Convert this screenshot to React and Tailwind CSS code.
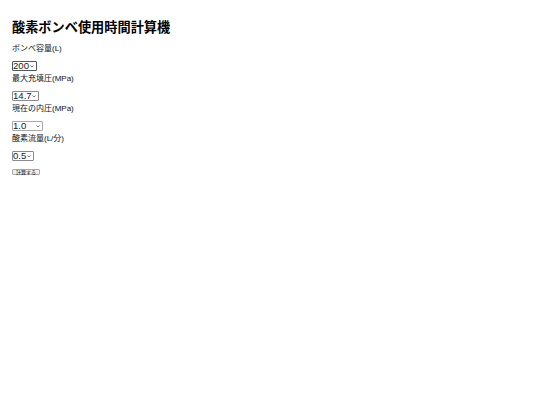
import { useState } from "react";

const fontCls = "font-['Liberation_Sans','Noto_Sans_CJK_JP',sans-serif]";

function Chevron() {
  return (
    <svg
      className="pointer-events-none absolute right-[3px] top-[4px] h-[2.5px] w-[4px]"
      viewBox="0 0 8 5"
      fill="none"
      stroke="#444"
      strokeWidth="1.4"
    >
      <path d="M1 1l3 3 3-3" />
    </svg>
  );
}

function Field({ label, value, options, onChange, width, border }) {
  return (
    <div className="flex flex-col items-start">
      <label className="block text-[8px] leading-[10px] text-[#111] mb-[7px]">{label}</label>
      <div className="relative mb-[3px] h-[10px]">
        <select
          value={value}
          onChange={(e) => onChange(e.target.value)}
          className={`block appearance-none bg-white h-[10px] text-[9.6px] leading-[8px] pl-0 pr-0 py-0 text-[#1a1a1a] rounded-[1px] border outline-none ${fontCls} ${width} ${border}`}
        >
          {options.map((o) => (
            <option key={o} value={o}>
              {o}
            </option>
          ))}
        </select>
        <Chevron />
      </div>
    </div>
  );
}

export default function App() {
  const [capacity, setCapacity] = useState("200");
  const [maxPressure, setMaxPressure] = useState("14.7");
  const [pressure, setPressure] = useState("1.0");
  const [flow, setFlow] = useState("0.5");

  const handleCalc = () => {
    // 使用可能時間(分) = 容量 × 内圧 / 最大充填圧 / 流量
    const minutes =
      (Number(capacity) * Number(pressure)) / Number(maxPressure) / Number(flow);
    console.log(minutes);
  };

  return (
    <div className={`min-h-[405px] bg-white pl-[12px] pt-[19px] ${fontCls}`}>
      <h1 className="text-[13.2px] leading-[17px] font-bold text-black mb-[8px]">
        酸素ボンベ使用時間計算機
      </h1>

      <Field
        label="ボンベ容量(L)"
        value={capacity}
        onChange={setCapacity}
        options={["200", "300", "500"]}
        width="w-[25px]"
        border="border-[#555]"
      />
      <Field
        label="最大充填圧(MPa)"
        value={maxPressure}
        onChange={setMaxPressure}
        options={["14.7", "19.6"]}
        width="w-[27px]"
        border="border-[#8a8a8a]"
      />
      <Field
        label="現在の内圧(MPa)"
        value={pressure}
        onChange={setPressure}
        options={["1.0", "5.0", "10.0", "14.7"]}
        width="w-[31px]"
        border="border-[#aaa]"
      />
      <Field
        label="酸素流量(L/分)"
        value={flow}
        onChange={setFlow}
        options={["0.5", "1", "2", "3"]}
        width="w-[22px]"
        border="border-[#8a8a8a]"
      />

      <button
        onClick={handleCalc}
        className={`mt-[5px] block h-[6px] w-[28px] bg-[#efefef] border border-[#aaa] rounded-[1px] text-[5px] leading-[4px] text-black p-0 ${fontCls}`}
      >
        計算する
      </button>
    </div>
  );
}
